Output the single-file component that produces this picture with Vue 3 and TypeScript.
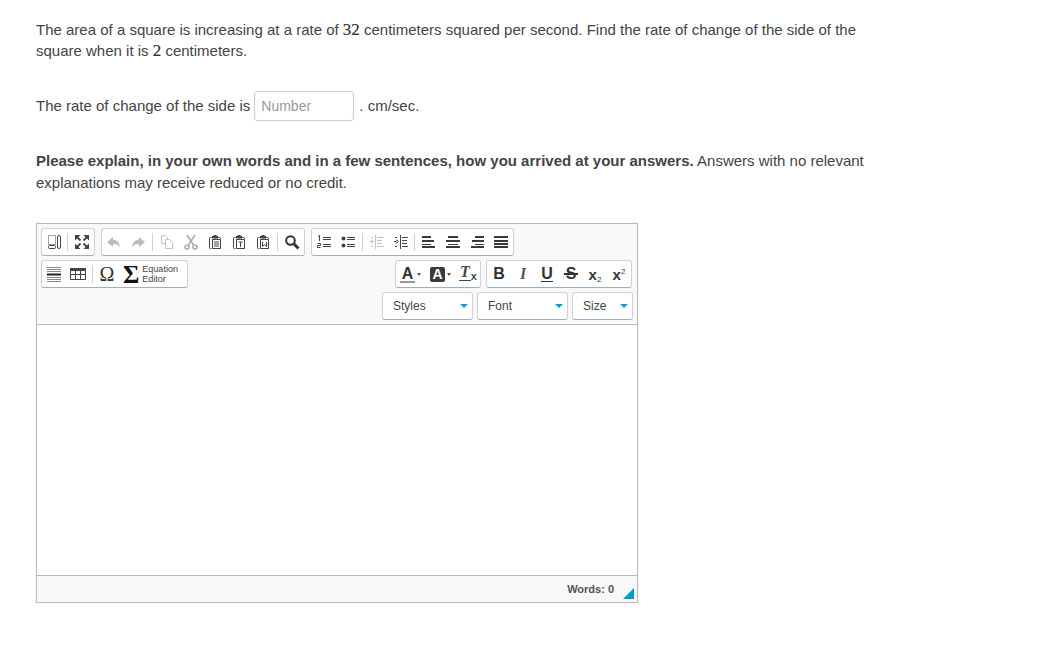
<script setup lang="ts">
const clip = '<path fill="none" stroke="#444" d="M4.500 3.500H3.500q-1 0-1 1v9q0 1 1 1h1M10.500 3.500h2q1 0 1 1V5"/><path fill="#444" d="M5 2h1.500V1h3v1H11v2.500H5z"/><path fill="none" stroke="#444" d="M5.500 5.500h8v9h-8z"/>'
const I: Record<string, string> = {
  blocks: '<g fill="none" stroke="#444"><path d="M2.500 1.500h7v9h-7z" stroke-dasharray="1 1"/><rect x="2.500" y="11.500" width="7" height="3" rx="1"/><rect x="11.500" y="1.500" width="3" height="13" rx="1.500"/></g>',
  max: '<g fill="#444"><path d="M1 1h5.500L1 6.500zM15 1v5.500L9.500 1zM1 15V9.500L6.500 15zM15 15H9.500L15 9.500z"/></g><path stroke="#444" stroke-width="1.800" d="M3 3l3.500 3.500M13 3 9.500 6.500M3 13l3.500-3.500M13 13 9.500 9.500"/>',
  undo: '<path fill="#bbb" d="M7 3 1 8l6 5v-3c3 0 5 .6 7 3-.4-4-3-7-7-7.400z"/>',
  redo: '<path fill="#bbb" d="m9 3 6 5-6 5v-3c-3 0-5 .6-7 3 .4-4 3-7 7-7.400z"/>',
  copy: '<g fill="none" stroke="#c4c4c4"><path d="M2.500 1.500h4l2 2v6h-6z"/><path d="M6.500 5.500h4l3 3v6h-7z" fill="#fff"/></g>',
  cut: '<g fill="none" stroke="#b0b0b0" stroke-width="1.700"><path d="M4 1l6.500 10M12 1 5.500 11"/><circle cx="4" cy="13" r="2"/><circle cx="12" cy="13" r="2"/></g>',
  paste: clip + '<path stroke="#444" d="M7 8h5M7 10h5M7 12h5"/>',
  pasteT: clip + '<path stroke="#444" fill="none" d="M7.500 8h4M9.500 8v5"/>',
  pasteW: clip + '<path stroke="#444" fill="none" d="M7.500 8v4.500l2-2 2 2V8"/>',
  find: '<g fill="none" stroke="#333"><circle cx="6.500" cy="6.500" r="4.300" stroke-width="2"/><path d="m10 10 4.500 4.500" stroke-width="3"/></g>',
  ol: '<g stroke="#444" fill="none"><path d="M7 3.500h8M7 5.500h8M7 10.500h8M7 12.500h8"/><path d="M2 2.500 3.500 1.500V7"/><path d="M1.500 9.500h3v2h-3v2h3"/></g>',
  ul: '<g fill="#444"><circle cx="3.500" cy="4.500" r="2"/><circle cx="3.500" cy="11.500" r="2"/><path d="M7 3h8v1H7zM7 5h8v1H7zM7 10h8v1H7zM7 12h8v1H7z"/></g>',
  out: '<g fill="#c4c4c4"><path d="M6 1h1v14H6zM1 7h4v1H1zM1 7.500 3.500 5v5z"/><path d="M8 3h7v1H8zM8 6h5v1H8zM8 9h5v1H8zM8 12h7v1H8z"/><path d="M2 3h2v1H2zM2 12h2v1H2z"/></g>',
  ind: '<g fill="#444"><path d="M7 1h1v14H7zM1 7h4v1H1zM6 7.500 3.500 5v5z"/><path d="M9 3h6v1H9zM9 6h5v1H9zM9 9h5v1H9zM9 12h6v1H9z"/><path d="M2 3h2v1H2zM2 12h2v1H2z"/></g>',
  left: '<path fill="#3a3a3a" d="M1 2h9v2H1zM1 6h12v2H1zM1 10h9v1H1zM1 12h13v2H1z"/>',
  center: '<path fill="#3a3a3a" d="M3 2h10v2H3zM1 6h14v2H1zM3 10h10v1H3zM1 12h14v2H1z"/>',
  right: '<path fill="#3a3a3a" d="M6 2h9v2H6zM3 6h12v2H3zM6 10h9v1H6zM2 12h13v2H2z"/>',
  just: '<path fill="#3a3a3a" d="M1 2h14v2H1zM1 6h14v2H1zM1 9h14v2H1zM1 12h14v2H1z"/>',
  hr: '<g fill="#888"><path d="M1 1h14v1H1zM1 3h14v1H1zM1 5h14v1H1zM1 11h14v1H1zM1 13h14v1H1zM1 15h14v1H1z"/></g><path fill="#222" d="M1 7.500h14v2H1z"/>',
  table: '<g fill="none" stroke="#444"><path d="M.5 2.500h15v11H.5zM5.500 2.500v11M10.500 2.500v11M.5 8.500h15"/></g><path fill="#444" d="M0 2h16v3H0z"/>',
}
const row1a = ['blocks', '!', 'max']
const row1b = ['undo', 'redo', '|', 'copy', 'cut', 'paste', 'pasteT', 'pasteW', '|', 'find']
const row1c = ['ol', 'ul', '|', 'out', 'ind', '!', 'left', 'center', 'right', 'just']
const row2a = ['hr', 'table', '|']
const styles = [
  { label: 'Styles', cls: 'wide' },
  { label: 'Font', cls: 'wide' },
  { label: 'Size', cls: 'narrow' },
]
</script>

<template>
  <main class="page">
    <p class="question">
      The area of a square is increasing at a rate of <span class="num">32</span> centimeters squared per second. Find the rate of change of the side of the
      square when it is <span class="num">2</span> centimeters.
    </p>
    <div class="answer">
      <span class="lift">The rate of change of the side is</span>
      <input class="field" type="text" placeholder="Number" />
      <span class="unit lift">. cm/sec.</span>
    </div>
    <p class="explain">
      <strong>Please explain, in your own words and in a few sentences, how you arrived at your answers.</strong> Answers with no relevant
      explanations may receive reduced or no credit.
    </p>

    <section class="editor">
      <div class="toolbar">
        <div class="row">
          <div v-for="(g, gi) in [row1a, row1b, row1c]" :key="gi" class="group">
            <template v-for="(n, i) in g" :key="i">
              <span v-if="n === '|' || n === '!'" class="sep" :class="{ tight: n === '!' }"></span>
              <span v-else class="btn"><svg width="16" height="16" viewBox="0 0 16 16" v-html="I[n]"></svg></span>
            </template>
          </div>
        </div>

        <div class="row split">
          <div class="group">
            <template v-for="(n, i) in row2a" :key="i">
              <span v-if="n === '|'" class="sep"></span>
              <span v-else class="btn"><svg width="16" height="16" viewBox="0 0 16 16" v-html="I[n]"></svg></span>
            </template>
            <span class="btn glyph omega">Ω</span>
            <span class="eq">
              <span class="sigma">Σ</span>
              <span class="eq-text">Equation<br />Editor</span>
            </span>
          </div>
          <div class="right-groups">
            <div class="group">
              <span class="btn wide30">
                <span class="color-a">A</span><i class="mini"></i>
              </span>
              <span class="btn wide30">
                <span class="color-b">A</span><i class="mini"></i>
              </span>
              <span class="btn"><span class="clear"><span class="clear-t">T</span><small>x</small></span></span>
            </div>
            <div class="group">
              <span class="btn glyph bold">B</span>
              <span class="btn glyph ital">I</span>
              <span class="btn glyph bold"><span class="under">U</span></span>
              <span class="btn glyph bold"><span class="strike">S</span></span>
              <span class="btn glyph script"><span>x<sub>2</sub></span></span>
              <span class="btn glyph script"><span>x<sup>2</sup></span></span>
            </div>
          </div>
        </div>

        <div class="row end">
          <div v-for="s in styles" :key="s.label" class="combo" :class="s.cls">
            <span>{{ s.label }}</span><i class="caret"></i>
          </div>
        </div>
      </div>
      <div class="content"></div>
      <div class="footer">
        <span class="words">Words: 0</span>
        <i class="resize"></i>
      </div>
    </section>
  </main>
</template>

<style>
html, body { margin: 0; background: #fff; }
</style>

<style scoped>
.page {
  box-sizing: border-box;
  width: 1042px;
  height: 664px;
  padding: 19px 0 0 36px;
  font-family: "Liberation Sans", Arial, sans-serif;
  font-size: 15px;
  color: #444;
  overflow: hidden;
}
p { margin: 0; width: 840px; }
.question { line-height: 21px; }
.num { font-family: "Liberation Serif", serif; font-size: 17px; line-height: 1; color: #333; -webkit-text-stroke: 0.2px #333; }
.answer { display: flex; align-items: center; margin-top: 30px; height: 30px; }
.lift { padding-bottom: 2px; }
.field {
  box-sizing: border-box;
  width: 100px;
  height: 30px;
  margin-left: 4px;
  padding: 0 6px;
  border: 1px solid #ccc;
  border-radius: 3px;
  font: inherit;
  font-size: 14px;
  color: #444;
  outline: none;
}
.field::placeholder { color: #999; opacity: 1; }
.unit { margin-left: 5px; }
.explain { margin-top: 29px; line-height: 22px; }
.explain strong { color: #444; }

.editor {
  box-sizing: border-box;
  width: 602px;
  height: 380px;
  margin-top: 29px;
  border: 1px solid #bbb;
  display: flex;
  flex-direction: column;
  box-shadow: 0 0 1px #ddd;
}
.toolbar {
  box-sizing: border-box;
  height: 101px;
  flex: none;
  padding: 4px 4px 0;
  background: #f8f8f8;
  border-bottom: 1px solid #bbb;
  display: flex;
  flex-direction: column;
  gap: 4px;
}
.row { display: flex; gap: 6px; height: 28px; }
.split { justify-content: space-between; padding-right: 1px; }
.right-groups { display: flex; gap: 5px; }
.end { justify-content: flex-end; gap: 4px; }
.group, .combo {
  box-sizing: border-box;
  height: 28px;
  background: #fff;
  border: 1px solid #d1d1d1;
  border-bottom-color: #9fb0b6;
  border-radius: 3px;
}
.group { display: flex; align-items: center; }
.btn {
  width: 24px;
  height: 26px;
  flex: none;
  display: flex;
  align-items: center;
  justify-content: center;
}
.sep { width: 1px; height: 18px; margin: 0 2px; background: #d0d0d0; flex: none; }
.sep.tight { margin: 0 2px 0 1px; }
.glyph { font-family: "Liberation Sans", sans-serif; color: #333; }
.omega { font-family: "Liberation Serif", serif; font-size: 20px; }
.eq { display: flex; align-items: center; width: 68px; height: 26px; padding-left: 4px; box-sizing: border-box; }
.sigma { font-family: "Liberation Serif", serif; font-weight: 700; font-size: 25px; color: #111; line-height: 1; }
.eq-text { font-size: 9px; line-height: 10px; margin-left: 3px; color: #444; }
.wide30 { width: 30px; justify-content: flex-start; padding-left: 4px; box-sizing: border-box; }
.color-a {
  font-weight: 700;
  font-size: 16px;
  line-height: 15px;
  width: 15px;
  text-align: center;
  color: #333;
  border-bottom: 2px solid #999;
}
.color-b {
  font-weight: 700;
  font-size: 14px;
  line-height: 15px;
  width: 15px;
  text-align: center;
  color: #fff;
  background: #3a3a3a;
  border-radius: 2px;
}
.mini {
  width: 0;
  height: 0;
  margin-left: 2px;
  border: 2.5px solid transparent;
  border-top: 3px solid #555;
  border-bottom: 0;
}
.clear {
  font-family: "Liberation Serif", serif;
  font-style: italic;
  font-weight: 700;
  font-size: 16px;
  line-height: 15px;
  color: #444;
}
.clear-t { border-bottom: 1px solid #444; padding: 0 1px; }
.clear small { font-family: "Liberation Sans", sans-serif; font-style: normal; font-size: 11px; vertical-align: -3px; }
.bold { font-weight: 700; font-size: 16px; }
.ital { font-family: "Liberation Serif", serif; font-style: italic; font-weight: 700; font-size: 16px; color: #555; }
.under { border-bottom: 1px solid #333; line-height: 14px; }
.strike { position: relative; }
.strike::after {
  content: "";
  position: absolute;
  left: -2px;
  right: -2px;
  top: 8px;
  height: 2px;
  background: #333;
}
.script { font-weight: 700; font-size: 15px; }
.script sub, .script sup { font-size: 8px; font-weight: 400; line-height: 0; }
.script sub { vertical-align: -2px; }
.combo {
  display: flex;
  align-items: center;
  justify-content: space-between;
  padding: 0 4px 0 10px;
  font-size: 12px;
  color: #444;
}
.wide { width: 91px; }
.narrow { width: 61px; }
.caret {
  width: 0;
  height: 0;
  border-left: 4px solid transparent;
  border-right: 4px solid transparent;
  border-top: 4px solid #00a0c6;
}
.content { flex: 1; background: #fff; }
.footer {
  box-sizing: border-box;
  height: 27px;
  flex: none;
  background: #f8f8f8;
  border-top: 1px solid #bbb;
  display: flex;
  align-items: center;
  justify-content: flex-end;
  position: relative;
  padding-right: 23px;
}
.words { font-size: 11px; font-weight: 700; color: #555; }
.resize {
  position: absolute;
  right: 3px;
  bottom: 3px;
  width: 0;
  height: 0;
  border-left: 11px solid transparent;
  border-bottom: 11px solid #00a0c6;
}
</style>
